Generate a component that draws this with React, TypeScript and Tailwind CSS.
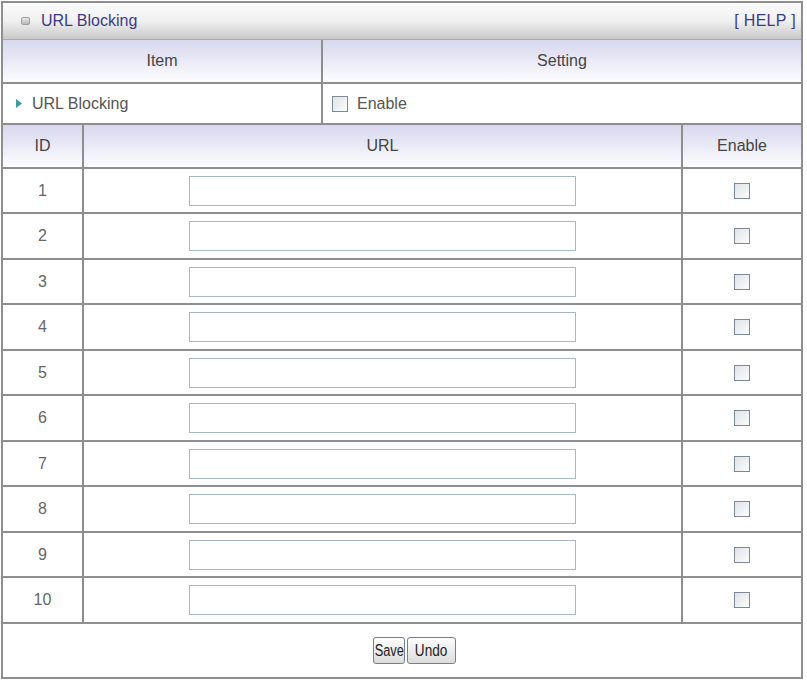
import React from "react";

const ids = [1, 2, 3, 4, 5, 6, 7, 8, 9, 10];

function Check() {
  return (
    <span className="inline-block w-[16px] h-[16px] border border-[#7d8a96] bg-gradient-to-br from-[#dfe3e8] to-[#fbfcfd]" />
  );
}

export default function App() {
  return (
    <div className="bg-white w-[807px] h-[682px] pt-[1px] pl-[1px]" style={{ fontFamily: '"Liberation Sans", Arial, sans-serif' }}>
      <div className="w-[802px] border-2 border-[#8e8e8e] text-[16px] text-[#555]">
        {/* title */}
        <div className="h-[37px] flex items-center justify-between pl-[18px] pr-[5px] bg-gradient-to-b from-[#fbfbfb] via-[#f0f0f0] to-[#c9c9c9] border-b border-[#a9a9a9]">
          <div className="flex items-center gap-[11px]">
            <span className="inline-block w-[9px] h-[8px] rounded-[2px] border border-[#a0a0a0] bg-gradient-to-b from-[#e8e8e8] to-[#b8b8b8]" />
            <span className="text-[#3c3a86]">URL Blocking</span>
          </div>
          <span className="text-[#3c3a86] tracking-[0.3px]">[ HELP ]</span>
        </div>
        {/* item/setting header */}
        <div className="flex h-[44px] border-b-2 border-[#8e8e8e] bg-gradient-to-b from-[#d8d7ee] to-[#fdfdff] text-[#444]">
          <div className="w-[320px] border-r-2 border-[#8e8e8e] flex items-center justify-center">Item</div>
          <div className="flex-1 flex items-center justify-center">Setting</div>
        </div>
        {/* URL blocking row */}
        <div className="flex h-[41px] border-b-2 border-[#8e8e8e]">
          <div className="w-[320px] border-r-2 border-[#8e8e8e] flex items-center pl-[13px] gap-[10px]">
            <svg width="6" height="9" viewBox="0 0 6 9"><path d="M0 0 L6 4.5 L0 9 Z" fill="#3a9c9c" /></svg>
            <span>URL Blocking</span>
          </div>
          <div className="flex-1 flex items-center pl-[9px] gap-[9px]">
            <Check />
            <span>Enable</span>
          </div>
        </div>
        {/* ID header */}
        <div className="flex h-[44px] border-b-2 border-[#8e8e8e] bg-gradient-to-b from-[#d8d7ee] to-[#fdfdff] text-[#444]">
          <div className="w-[81px] border-r-2 border-[#8e8e8e] flex items-center justify-center">ID</div>
          <div className="w-[599px] border-r-2 border-[#8e8e8e] flex items-center justify-center">URL</div>
          <div className="flex-1 flex items-center justify-center">Enable</div>
        </div>
        {ids.map((id, i) => (
          <div key={id} className={`flex border-b-2 border-[#8e8e8e] ${i % 2 === 0 ? "h-[45px]" : "h-[46px]"}`}>
            <div className="w-[81px] border-r-2 border-[#8e8e8e] flex items-center justify-center text-[#666]">{id}</div>
            <div className="w-[599px] border-r-2 border-[#8e8e8e] flex items-center justify-center">
              <div className="w-[387px] h-[30px] border border-[#a8b7c4] bg-white" />
            </div>
            <div className="flex-1 flex items-center justify-center">
              <Check />
            </div>
          </div>
        ))}
        {/* footer */}
        <div className="h-[53px] flex items-center justify-center gap-[2px] pl-[25px]">
          <button className="w-[32px] h-[27px] px-0 flex items-center justify-center rounded-[3px] border border-[#6f7f99] bg-gradient-to-b from-[#fdfdfd] to-[#dcdcdc] text-[#222] text-[16px]">
            <span className="inline-block scale-x-[0.8]">Save</span>
          </button>
          <button className="w-[49px] h-[27px] px-0 flex items-center justify-center rounded-[3px] border border-[#6f7f99] bg-gradient-to-b from-[#fdfdfd] to-[#dcdcdc] text-[#222] text-[16px]">
            <span className="inline-block scale-x-[0.85]">Undo</span>
          </button>
        </div>
      </div>
    </div>
  );
}
